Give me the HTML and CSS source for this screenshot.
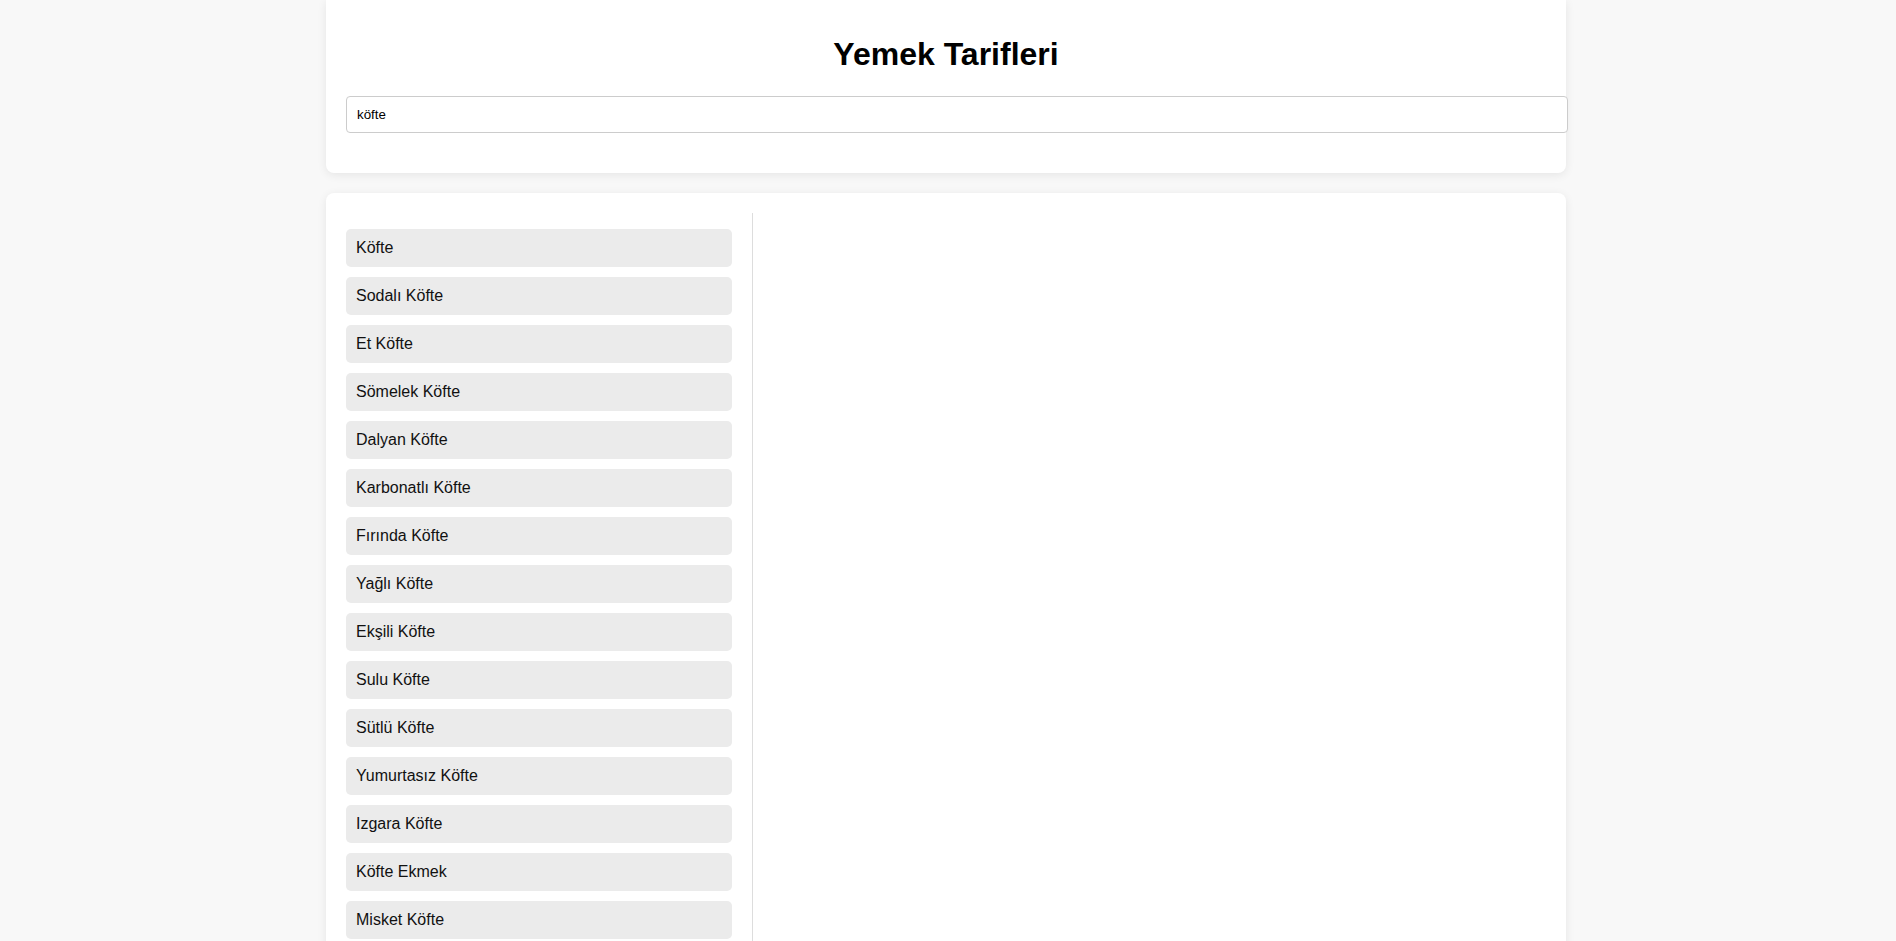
FILE: index.html
```html
<!DOCTYPE html>
<html lang="tr">
<head>
<meta charset="utf-8">
<title>Yemek Tarifleri</title>
<link rel="stylesheet" href="styles.css">
</head>
<body>
<div class="container">
  <div class="card header-card">
    <h1 class="title">Yemek Tarifleri</h1>
    <input class="search" type="text" value="köfte">
  </div>
  <div class="card content-card">
    <div class="list-panel">
      <ul class="recipe-list">
        <li class="recipe-item">Köfte</li>
        <li class="recipe-item">Sodalı Köfte</li>
        <li class="recipe-item">Et Köfte</li>
        <li class="recipe-item">Sömelek Köfte</li>
        <li class="recipe-item">Dalyan Köfte</li>
        <li class="recipe-item">Karbonatlı Köfte</li>
        <li class="recipe-item">Fırında Köfte</li>
        <li class="recipe-item">Yağlı Köfte</li>
        <li class="recipe-item">Ekşili Köfte</li>
        <li class="recipe-item">Sulu Köfte</li>
        <li class="recipe-item">Sütlü Köfte</li>
        <li class="recipe-item">Yumurtasız Köfte</li>
        <li class="recipe-item">Izgara Köfte</li>
        <li class="recipe-item">Köfte Ekmek</li>
        <li class="recipe-item">Misket Köfte</li>
      </ul>
    </div>
    <div class="detail-panel"></div>
  </div>
</div>
</body>
</html>
```

FILE: styles.css
```css
html, body {
  margin: 0;
  padding: 0;
}
body {
  background: #f8f8f8;
  font-family: "Liberation Sans", Arial, sans-serif;
  color: #111;
  padding-right: 4px;
}
.container {
  width: 1240px;
  margin: 0 auto;
}
.card {
  background: #fff;
  border-radius: 8px;
  box-shadow: 0 2px 10px rgba(0, 0, 0, 0.08);
  box-sizing: border-box;
}
.header-card {
  padding: 36px 20px 20px;
  border-radius: 0 0 8px 8px;
}
.title {
  margin: 0 0 23px;
  font-size: 32px;
  line-height: 37px;
  font-weight: bold;
  text-align: center;
  color: #000;
}
.search {
  display: block;
  width: 100%;
  padding: 10px;
  margin: 0 0 20px;
  border: 1px solid #ccc;
  border-radius: 4px;
  font-family: "Liberation Sans", Arial, sans-serif;
  font-size: 13.333px;
  line-height: 15px;
  color: #000;
  outline: none;
}
.content-card {
  margin-top: 20px;
  padding: 20px;
  display: flex;
}
.list-panel {
  flex: 1;
  padding-right: 20px;
  border-right: 1px solid #ddd;
}
.detail-panel {
  flex: 2;
  padding-left: 20px;
}
.recipe-list {
  list-style: none;
  margin: 16px 0;
  padding: 0;
}
.recipe-item {
  background: #ebebeb;
  border-radius: 5px;
  padding: 10px;
  margin-bottom: 10px;
  font-size: 16px;
  line-height: 18px;
  color: #111;
}
```
